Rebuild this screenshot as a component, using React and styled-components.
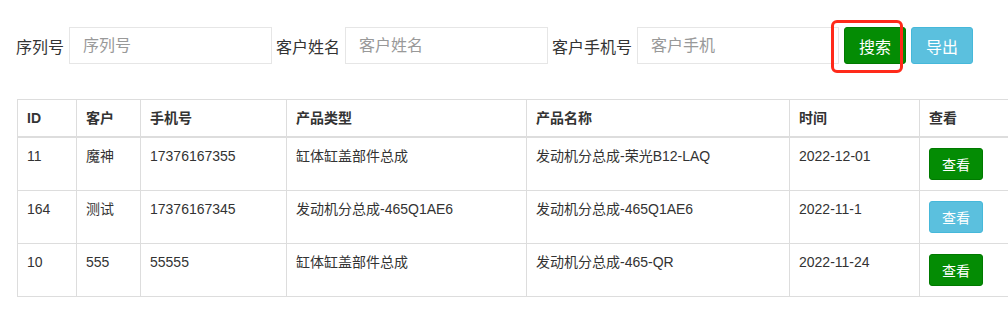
import styled, { createGlobalStyle } from "styled-components";

const GlobalStyle = createGlobalStyle`
  html, body {
    margin: 0;
    padding: 0;
    background: #fff;
    overflow: hidden;
  }
  body {
    font-family: "Liberation Sans", "Noto Sans CJK SC", sans-serif;
    color: #333;
  }
`;

const Page = styled.div`
  width: 1008px;
  height: 322px;
  overflow: hidden;
`;

const SearchBar = styled.form`
  display: flex;
  align-items: center;
  height: 37px;
  margin: 27px 0 0 16px;
  font-size: 16px;
`;

const Label = styled.label`
  margin-right: 5px;
  white-space: nowrap;
  color: #333;
`;

const Input = styled.input`
  box-sizing: border-box;
  width: ${(p) => p.$width || 203}px;
  height: 37px;
  margin-right: 4px;
  padding: 0 13px;
  border: 1px solid #e6e6e6;
  font-size: 16px;
  font-family: inherit;
  color: #333;
  outline: none;
  &::placeholder {
    color: #999;
  }
`;

const Button = styled.button`
  box-sizing: border-box;
  height: ${(p) => (p.$small ? "32px" : "37px")};
  padding: 0 ${(p) => (p.$small ? "12px" : "14px")};
  border: 1px solid ${(p) => (p.$variant === "info" ? "#46b8da" : "#007a00")};
  border-radius: 3px;
  background: ${(p) => (p.$variant === "info" ? "#5bc0de" : "#048c04")};
  color: #fff;
  font-size: ${(p) => (p.$small ? "14px" : "16px")};
  font-family: inherit;
  cursor: pointer;
  white-space: nowrap;
`;

const Highlight = styled.span`
  position: relative;
  margin-left: 1px;
  margin-right: 5px;
  display: inline-flex;
`;

const RedBox = styled.span`
  position: absolute;
  left: -13px;
  top: -7px;
  width: 72px;
  height: 53px;
  box-sizing: border-box;
  border: 3px solid #ff2a1a;
  border-radius: 6px;
  pointer-events: none;
`;

const Table = styled.table`
  margin: 35px 0 0 17px;
  width: 1040px;
  border-collapse: collapse;
  font-size: 14px;
  line-height: 20px;
  table-layout: fixed;

  th,
  td {
    border: 1px solid #ddd;
    padding: 8px 8px 8px 9px;
    text-align: left;
    vertical-align: top;
    white-space: nowrap;
  }
  th {
    font-weight: bold;
    border-bottom-width: 2px;
  }
  td {
    height: 36px;
  }
`;

const CellButton = styled(Button)`
  display: block;
  margin: 2px 0 0 0;
`;

const columns = [
  { title: "ID", width: 59 },
  { title: "客户", width: 64 },
  { title: "手机号", width: 146 },
  { title: "产品类型", width: 240 },
  { title: "产品名称", width: 263 },
  { title: "时间", width: 130 },
  { title: "查看", width: 138 },
];

const rows = [
  { id: "11", name: "魔神", phone: "17376167355", type: "缸体缸盖部件总成", product: "发动机分总成-荣光B12-LAQ", date: "2022-12-01", variant: "success" },
  { id: "164", name: "测试", phone: "17376167345", type: "发动机分总成-465Q1AE6", product: "发动机分总成-465Q1AE6", date: "2022-11-1", variant: "info" },
  { id: "10", name: "555", phone: "55555", type: "缸体缸盖部件总成", product: "发动机分总成-465-QR", date: "2022-11-24", variant: "success" },
];

export default function App() {
  return (
    <Page>
      <GlobalStyle />
      <SearchBar onSubmit={(e) => e.preventDefault()}>
        <Label>序列号</Label>
        <Input placeholder="序列号" />
        <Label>客户姓名</Label>
        <Input placeholder="客户姓名" />
        <Label>客户手机号</Label>
        <Input placeholder="客户手机" $width={202} />
        <Highlight>
          <Button type="submit">搜索</Button>
          <RedBox />
        </Highlight>
        <Button type="button" $variant="info">导出</Button>
      </SearchBar>

      <Table>
        <colgroup>
          {columns.map((c) => (
            <col key={c.title} style={{ width: c.width }} />
          ))}
        </colgroup>
        <thead>
          <tr>
            {columns.map((c) => (
              <th key={c.title}>{c.title}</th>
            ))}
          </tr>
        </thead>
        <tbody>
          {rows.map((r) => (
            <tr key={r.id}>
              <td>{r.id}</td>
              <td>{r.name}</td>
              <td>{r.phone}</td>
              <td>{r.type}</td>
              <td>{r.product}</td>
              <td>{r.date}</td>
              <td>
                <CellButton type="button" $small $variant={r.variant}>
                  查看
                </CellButton>
              </td>
            </tr>
          ))}
        </tbody>
      </Table>
    </Page>
  );
}
